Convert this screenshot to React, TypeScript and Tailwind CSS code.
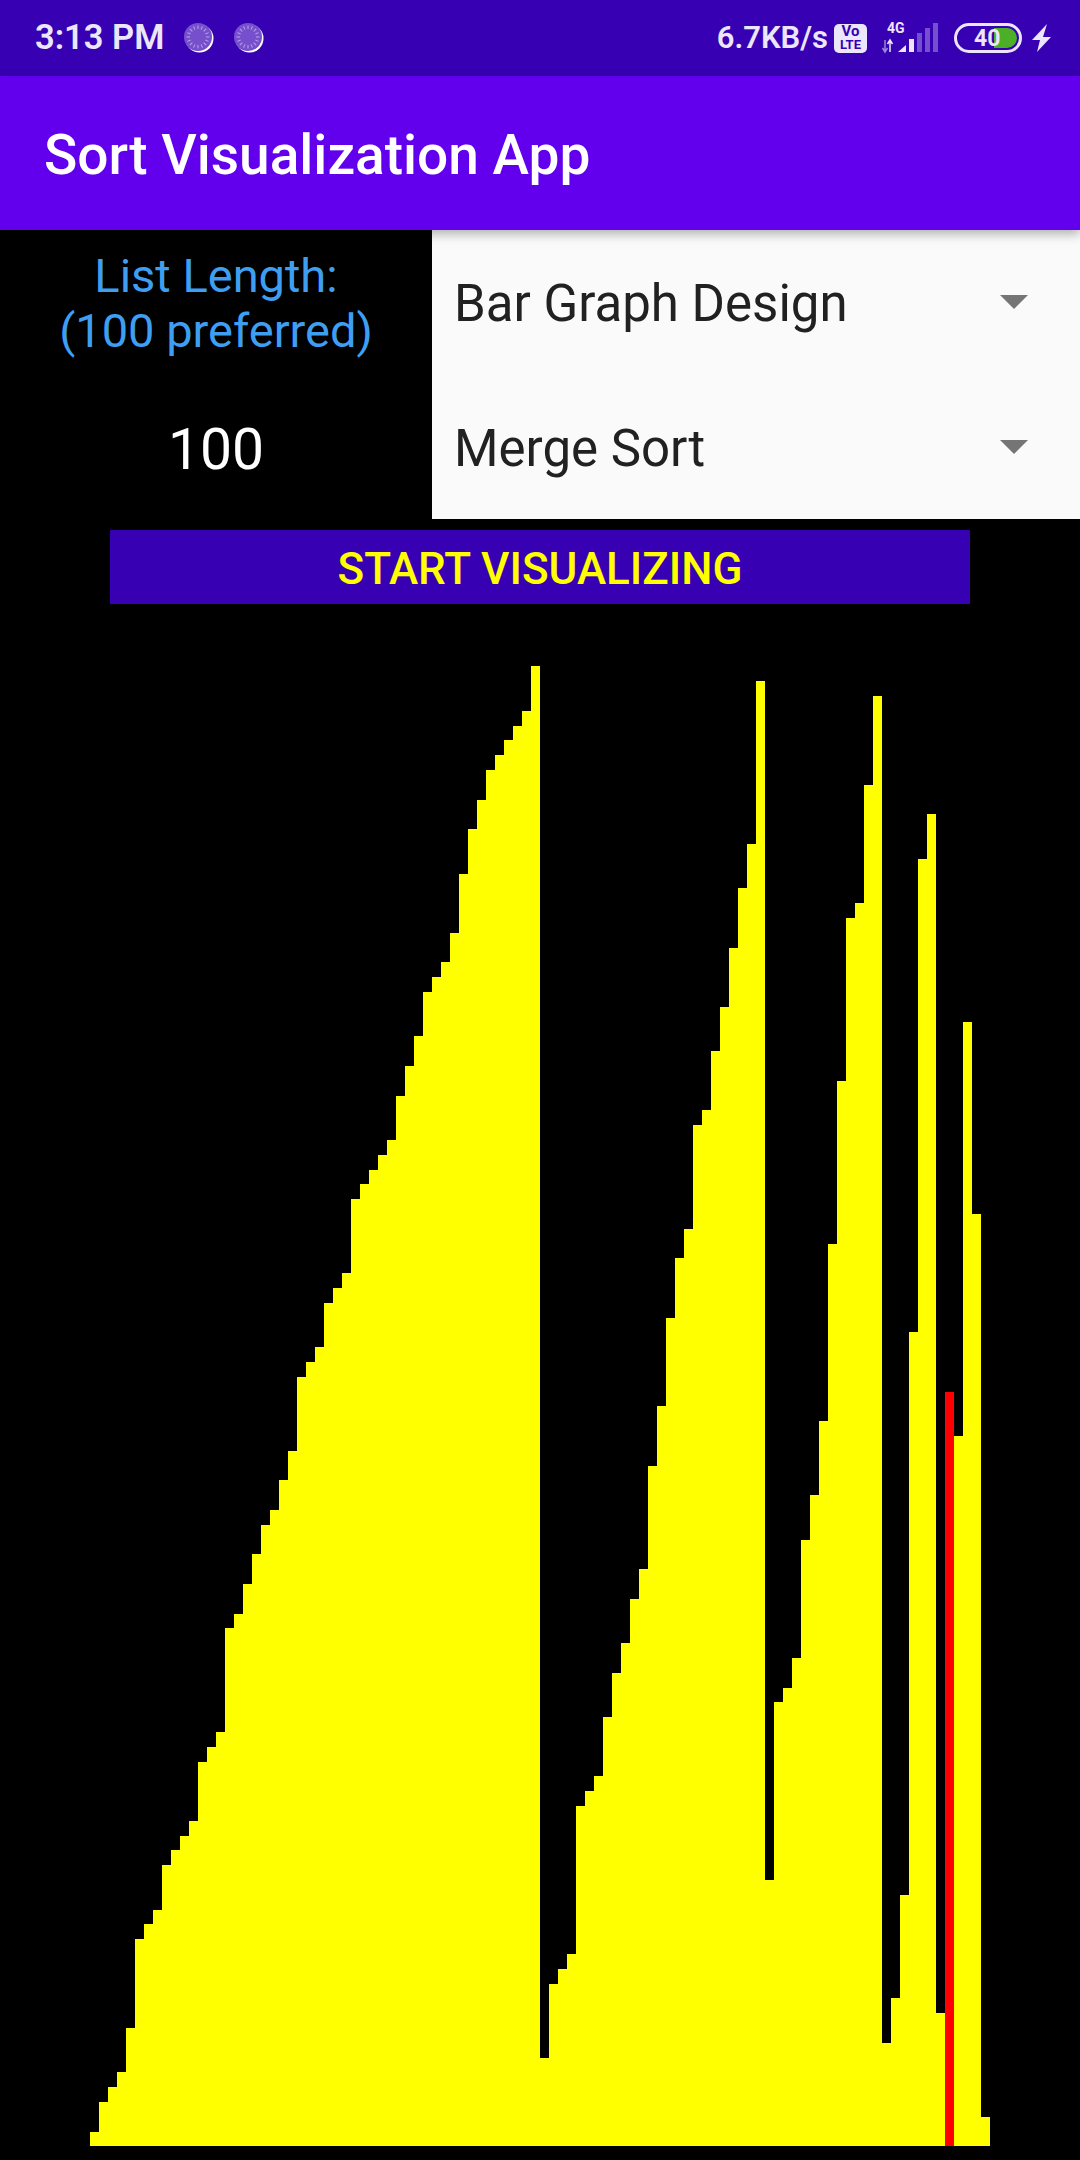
const barTops = [
  2132, 2102, 2087, 2072, 2028, 1939, 1924, 1910, 1865, 1850,
  1836, 1821, 1762, 1747, 1732, 1628, 1614, 1584, 1554, 1525,
  1510, 1480, 1451, 1377, 1362, 1347, 1303, 1288, 1273, 1199,
  1184, 1170, 1155, 1140, 1096, 1066, 1036, 992, 977, 962,
  933, 874, 829, 800, 770, 755, 740, 726, 711, 666,
  2058, 1984, 1969, 1954, 1806, 1791, 1776, 1717, 1673, 1643,
  1599, 1569, 1466, 1406, 1318, 1258, 1229, 1125, 1110, 1051,
  1007, 948, 888, 844, 681, 1880, 1702, 1688, 1658, 1540,
  1495, 1421, 1244, 1081, 918, 903, 785, 696, 2043, 1998,
  1895, 1332, 859, 814, 2013, 1392, 1436, 1022, 1214, 2117,
];
const CHART_BOTTOM = 2146;
const ACTIVE_BAR = 95;

function LoaderIcon() {
  const ticks = Array.from({ length: 16 }, (_, i) => (i * 360) / 16);
  return (
    <svg width="30" height="30" viewBox="0 0 30 30">
      <circle cx="15.5" cy="15.5" r="14" fill="#ffffff" />
      <circle cx="14" cy="14" r="14" fill="#7650cc" />
      {ticks.map((a) => (
        <line key={a} x1="14" y1="2.5" x2="14" y2="6" stroke="#b9a3e6" strokeWidth="1" transform={`rotate(${a} 14 14)`} />
      ))}
    </svg>
  );
}

function VolteIcon() {
  return (
    <div className="flex h-[29px] w-[33px] flex-col items-center justify-center rounded-[5px] bg-[#ece6fa] text-[#3700b3] font-bold">
      <span className="text-[15px] leading-[13px]">Vo</span>
      <span className="text-[13px] leading-[13px]">LTE</span>
    </div>
  );
}

function SignalIcon() {
  return (
    <div className="relative h-[32px] w-[58px]">
      <span className="absolute left-[6px] top-[-1px] text-[14px] font-bold leading-[14px] text-[#ece6fa]">4G</span>
      <svg className="absolute left-0 top-0" width="58" height="32" viewBox="0 0 58 32">
        <path d="M4 18v12M1.5 26l2.5 4 2.5-4" stroke="#9b86db" strokeWidth="1.5" fill="none" />
        <path d="M9 30V18M6.5 22l2.5-4 2.5 4" stroke="#ece6fa" strokeWidth="1.5" fill="none" />
        <path d="M17 30h8v-7z" fill="#ece6fa" />
        <rect x="28" y="17" width="5" height="13" fill="#ece6fa" />
        <rect x="36" y="11" width="5" height="19" fill="#7650cc" />
        <rect x="44" y="6" width="5" height="24" fill="#7650cc" />
        <rect x="52" y="1" width="5" height="29" fill="#7650cc" />
      </svg>
    </div>
  );
}

function BatteryIcon() {
  return (
    <div className="relative flex h-[30px] w-[68px] items-center overflow-hidden rounded-full border-[3px] border-[#ece6fa]">
      <div className="absolute right-[2px] top-[2px] h-[20px] w-[23px] rounded-r-full bg-[#4caf28]" />
      <span className="relative ml-[17px] text-[23px] font-bold leading-none text-[#ece6fa]">40</span>
    </div>
  );
}

function DropdownRow({ label }: { label: string }) {
  return (
    <div className="flex flex-1 items-center justify-between pl-[22px] pr-[52px]">
      <span className="pt-[3px] text-[51px] leading-none text-[#212121]">{label}</span>
      <div className="h-0 w-0 border-x-[14px] border-t-[14px] border-x-transparent border-t-[#757575]" />
    </div>
  );
}

export default function App() {
  return (
    <div className="min-h-[2160px] bg-black font-['Roboto',sans-serif]">
      <div className="flex h-[76px] items-center justify-between bg-[#3700b3] pl-[35px] pr-[28px] text-[#ece6fa]">
        <div className="flex items-center">
          <span className="text-[34.5px] font-semibold">3:13 PM</span>
          <div className="ml-[20px] flex gap-[20px]">
            <LoaderIcon />
            <LoaderIcon />
          </div>
        </div>
        <div className="flex items-center">
          <span className="text-[31px] font-semibold">6.7KB/s</span>
          <div className="ml-[6px]"><VolteIcon /></div>
          <div className="ml-[14px]"><SignalIcon /></div>
          <div className="ml-[15px]"><BatteryIcon /></div>
          <svg className="ml-[10px]" width="20" height="30" viewBox="0 0 20 30">
            <path d="M15 1 0 17h8L5 29l14-15h-8z" fill="#ece6fa" />
          </svg>
        </div>
      </div>

      <header className="relative z-10 flex h-[154px] items-center bg-[#6200ee] pl-[44px] pt-[4px] shadow-[0_4px_10px_rgba(0,0,0,0.3)]">
        <h1 className="text-[55px] font-medium text-white">Sort Visualization App</h1>
      </header>

      <div className="flex h-[289px]">
        <div className="flex w-[432px] flex-col items-center">
          <p className="mt-[18px] text-center text-[47px] leading-[55px] text-[#3e9ff2]">
            List Length:
            <br />
            (100 preferred)
          </p>
          <span className="mt-[60px] text-[57px] leading-[64px] text-white">100</span>
        </div>
        <div className="flex flex-1 flex-col bg-[#fafafa]">
          <DropdownRow label="Bar Graph Design" />
          <DropdownRow label="Merge Sort" />
        </div>
      </div>

      <div className="mt-[11px] flex justify-center">
        <button className="h-[74px] w-[860px] bg-[#3700b3] pt-[3px] text-[44px] font-medium text-[#ffff00]">START VISUALIZING</button>
      </div>

      <div className="flex h-[1542px] items-end pl-[90px]">
        {barTops.map((top, i) => (
          <div
            key={i}
            className={i === ACTIVE_BAR ? 'w-[9px] bg-[#ff0000]' : 'w-[9px] bg-[#ffff00]'}
            style={{ height: CHART_BOTTOM - top }}
          />
        ))}
      </div>
    </div>
  );
}
